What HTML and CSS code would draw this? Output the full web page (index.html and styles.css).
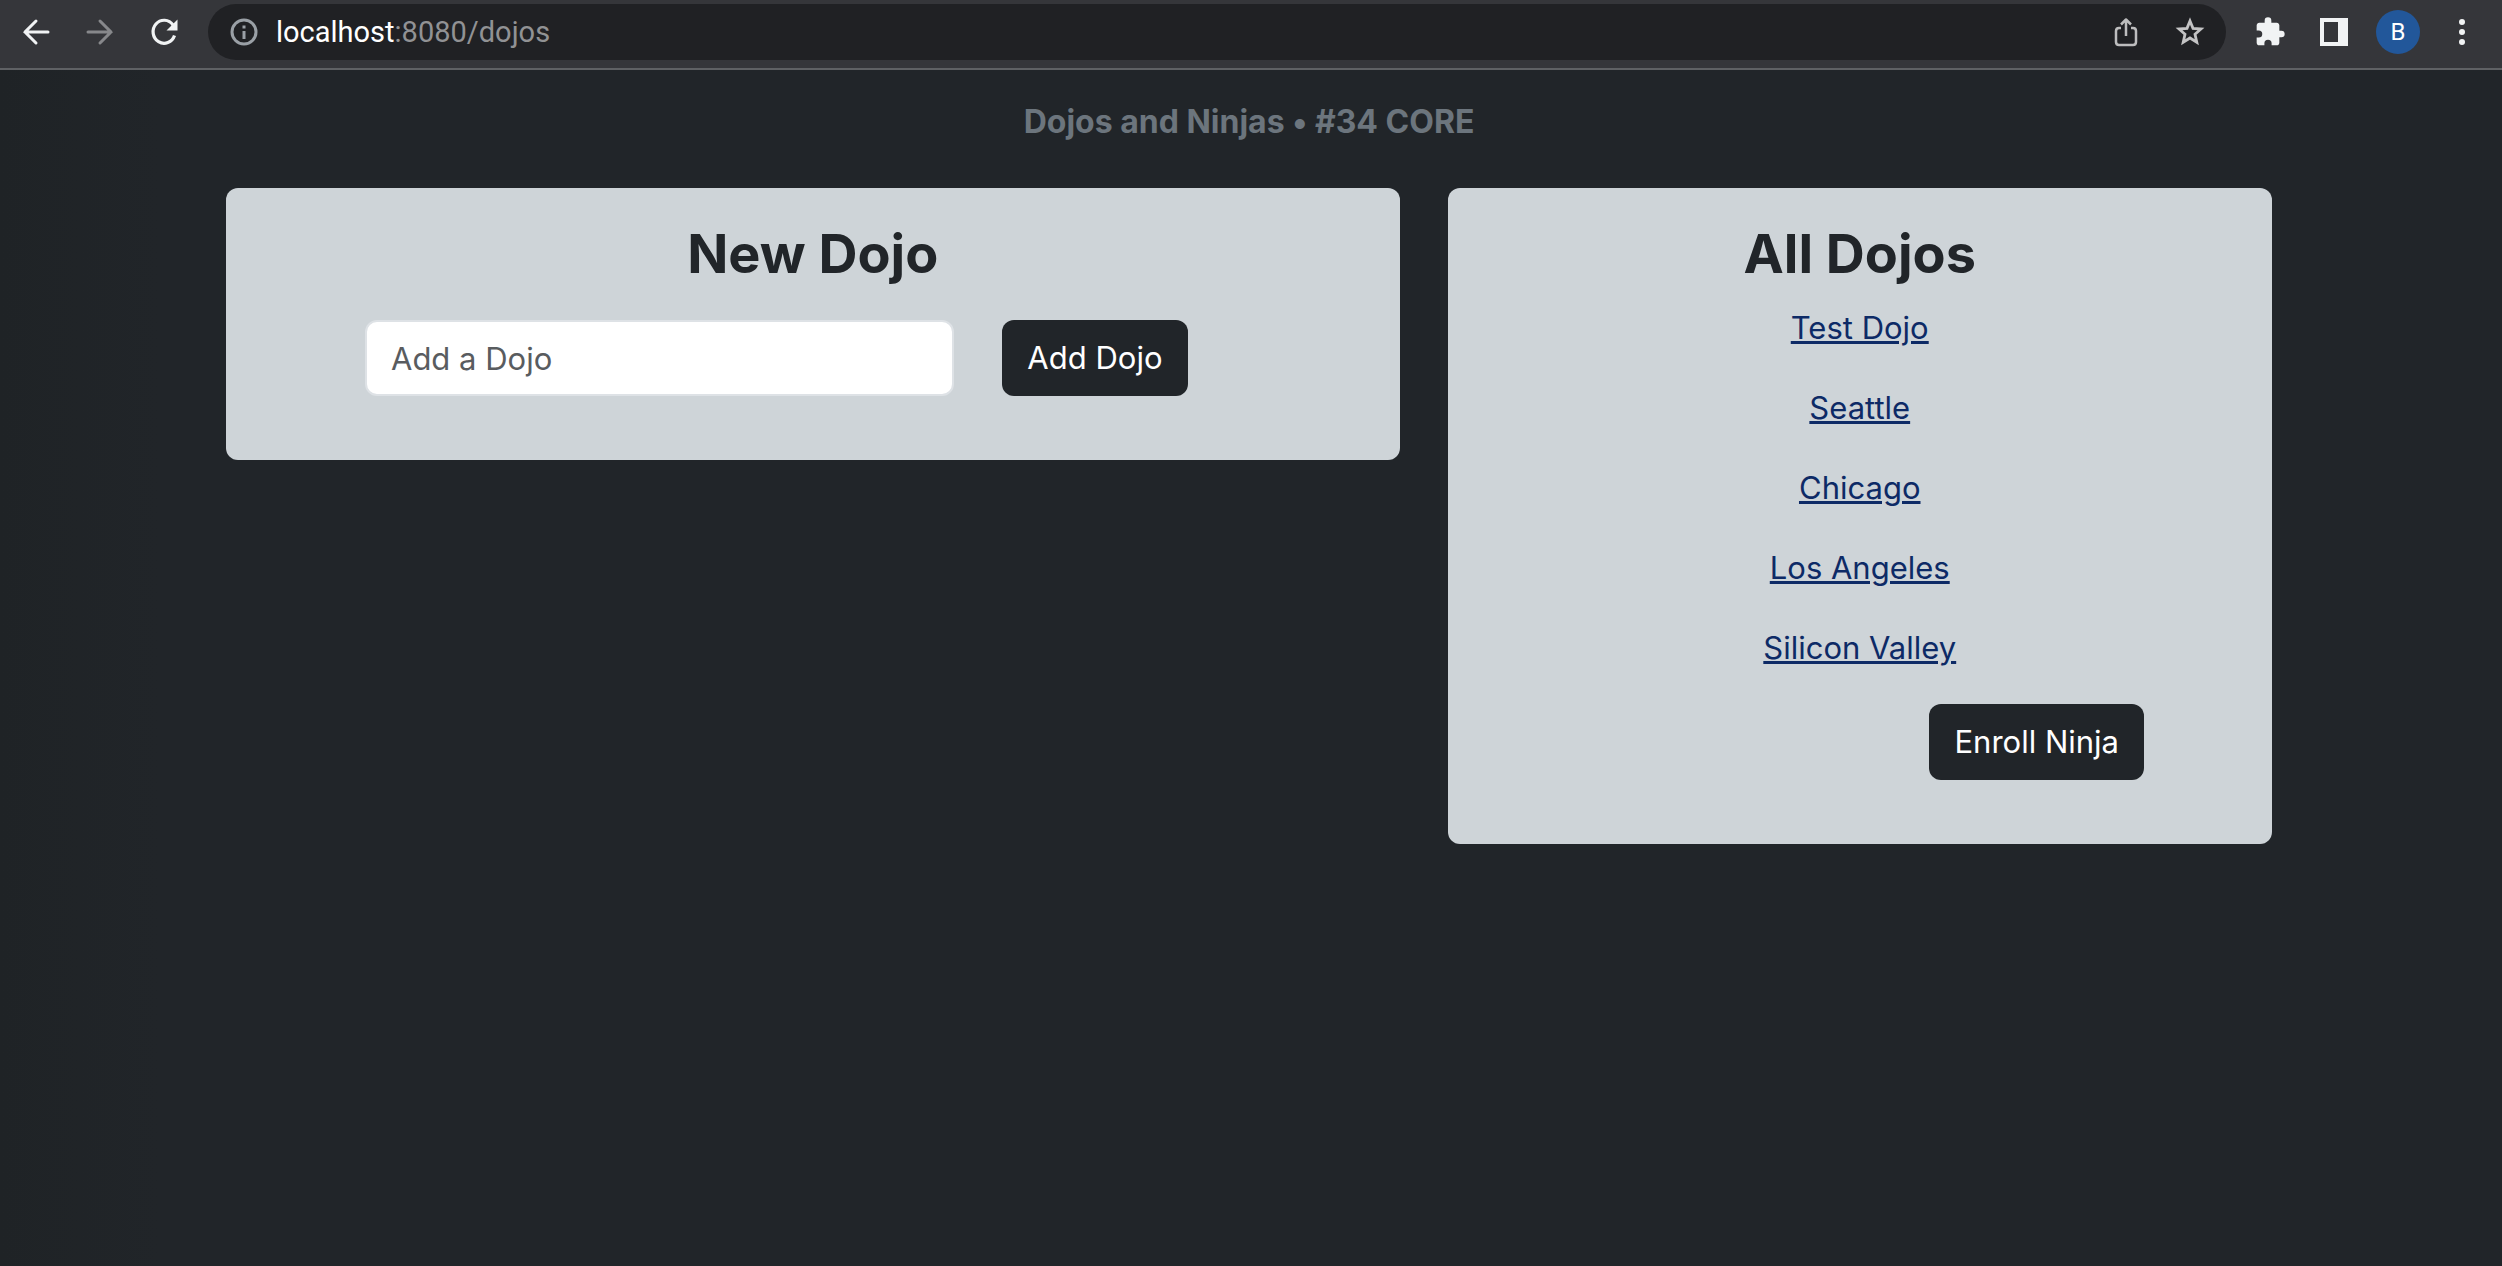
FILE: index.html
```html
<!DOCTYPE html>
<html lang="en">
<head>
<meta charset="utf-8">
<title>Dojos and Ninjas</title>
<link rel="stylesheet" href="styles.css">
</head>
<body>
<header class="toolbar">
  <div class="nav-buttons">
    <button class="icon-button" type="button" aria-label="Back">
      <svg class="icon" viewBox="0 0 32 32"><path d="M28 16H5M16 5L5 16l11 11" fill="none" stroke="#f1f3f4" stroke-width="3" stroke-linecap="round"/></svg>
    </button>
    <button class="icon-button" type="button" aria-label="Forward" disabled>
      <svg class="icon" viewBox="0 0 32 32"><path d="M4 16h23M16 5l11 11-11 11" fill="none" stroke="#87888b" stroke-width="3" stroke-linecap="round"/></svg>
    </button>
    <button class="icon-button" type="button" aria-label="Reload">
      <svg class="icon" viewBox="0 0 32 32"><path d="M26.500 19.500A11 11.500 0 1 1 25 9" fill="none" stroke="#f1f3f4" stroke-width="3.200"/><path d="M29.500 3.500V14.500H18.500z" fill="#f1f3f4"/></svg>
    </button>
  </div>
  <div class="omnibox">
    <svg class="icon" viewBox="0 0 32 32"><circle cx="16" cy="16" r="12" fill="none" stroke="#9aa0a6" stroke-width="3"/><path d="M16 9.500v3M16 15v8" stroke="#9aa0a6" stroke-width="3"/></svg>
    <div class="address">localhost<span class="address-path">:8080/dojos</span></div>
    <button class="icon-button" type="button" aria-label="Share">
      <svg class="icon" viewBox="0 0 32 32"><path d="M11 12H9q-3 0-3 3v11q0 3 3 3h14q3 0 3-3V15q0-3-3-3h-2M16 20V4M11 8.500L16 3.500l5 5" fill="none" stroke="#bdbdbe" stroke-width="2.500" stroke-linejoin="round"/></svg>
    </button>
    <button class="icon-button" type="button" aria-label="Bookmark">
      <svg class="icon" viewBox="0 0 32 32"><path d="M16 5L19 12.400 27 13 21 18.300 22.800 26.200 16 22 9.200 26.200 11 18.300 5 13 13 12.400z" fill="none" stroke="#c4c4c5" stroke-width="2.800"/></svg>
    </button>
  </div>
  <div class="actions">
    <button class="icon-button" type="button" aria-label="Extensions">
      <svg class="icon" viewBox="0 0 24 24"><path d="M20.500 11H19V7c0-1.100-.9-2-2-2h-4V3.500a2.500 2.500 0 0 0-5 0V5H4c-1.100 0-2 .9-2 2v3.800h1.500a2.700 2.700 0 0 1 0 5.400H2V20c0 1.100.9 2 2 2h3.800v-1.500a2.700 2.700 0 0 1 5.400 0V22H17c1.100 0 2-.9 2-2v-4h1.500a2.500 2.500 0 0 0 0-5z" fill="#f1f3f4"/></svg>
    </button>
    <button class="icon-button" type="button" aria-label="Side panel">
      <svg class="icon" viewBox="0 0 32 32"><path d="M2 2h28v28H2zM6 6v20h14V6z" fill="#f1f3f4" fill-rule="evenodd"/></svg>
    </button>
    <button class="avatar" type="button">B</button>
    <button class="icon-button" type="button" aria-label="Menu">
      <svg class="icon" viewBox="0 0 32 32"><g fill="#f1f3f4"><circle cx="16" cy="6" r="3"/><circle cx="16" cy="16" r="3"/><circle cx="16" cy="26" r="3"/></g></svg>
    </button>
  </div>
</header>
<main class="page">
  <h1 class="page-title">Dojos and Ninjas • #34 CORE</h1>
  <div class="columns">
    <section class="card card-new">
      <h2 class="card-title">New Dojo</h2>
      <form class="dojo-form">
        <input class="field" type="text" name="name" placeholder="Add a Dojo" aria-label="Dojo name">
        <button class="button" type="submit">Add Dojo</button>
      </form>
    </section>
    <section class="card card-all">
      <h2 class="card-title">All Dojos</h2>
      <ul class="dojo-list">
        <li><a href="#test-dojo">Test Dojo</a></li>
        <li><a href="#seattle">Seattle</a></li>
        <li><a href="#chicago">Chicago</a></li>
        <li><a href="#los-angeles">Los Angeles</a></li>
        <li><a href="#silicon-valley">Silicon Valley</a></li>
      </ul>
      <div class="card-footer">
        <a class="button" href="#enroll">Enroll Ninja</a>
      </div>
    </section>
  </div>
</main>
</body>
</html>
```
FILE: styles.css
```css
* {
  box-sizing: border-box;
}

body {
  margin: 0;
  min-height: 100vh;
  background: linear-gradient(90deg, #1f2326, #212529 160px);
  color: #212529;
  font-family: Inter, "Liberation Sans", sans-serif;
  font-size: 31px;
  line-height: 48px;
}

button {
  border: 0;
  font: inherit;
}

/* Browser toolbar */
.toolbar {
  display: flex;
  align-items: center;
  height: 70px;
  padding: 0 24px 4px 20px;
  border-bottom: 2px solid #5f6164;
  background: #35363a;
}

.nav-buttons {
  display: flex;
  gap: 32px;
  margin-right: 28px;
}

.icon-button {
  display: flex;
  padding: 0;
  background: none;
}

.icon {
  display: block;
  width: 32px;
  height: 32px;
}

.omnibox {
  display: flex;
  flex: 1;
  align-items: center;
  gap: 32px;
  height: 56px;
  padding: 0 20px;
  border-radius: 28px;
  background: #202124;
}

.address {
  flex: 1;
  margin-left: -16px;
  color: #fff;
  font-family: Roboto, "Liberation Sans", sans-serif;
  font-size: 29px;
  line-height: 32px;
}

.address-path {
  color: #919294;
}

.actions {
  display: flex;
  align-items: center;
  gap: 32px;
  margin-left: 28px;
}

.avatar {
  width: 44px;
  height: 44px;
  margin: 0 -6px;
  padding: 0;
  border-radius: 50%;
  background: #22579a;
  color: #fff;
  font-family: Roboto, "Liberation Sans", sans-serif;
  font-size: 24px;
  line-height: 44px;
}

/* Page */
.page {
  padding: 28px 4px 48px 0;
}

.page-title {
  margin: 0 0 42px;
  color: #6c757d;
  font-size: 32px;
  font-weight: 700;
  line-height: 48px;
  text-align: center;
}

.columns {
  display: grid;
  grid-template-columns: repeat(12, 1fr);
  align-items: start;
  gap: 48px;
  max-width: 2046px;
  margin: 0 auto;
}

.card {
  padding: 32px 48px 64px;
  border-radius: 12px;
  background: #ced4d8;
}

.card-new {
  grid-column: span 7;
}

.card-all {
  grid-column: span 5;
}

.card-title {
  margin: 0;
  font-size: 54px;
  font-weight: 700;
  line-height: 68px;
  text-align: center;
}

.dojo-form {
  display: flex;
  gap: 48px;
  margin: 32px 164px 0 91px;
}

.field {
  flex: 1;
  min-width: 0;
  height: 76px;
  padding: 12px 24px;
  border: 2px solid #dee2e6;
  border-radius: 12px;
  background: #fff;
  color: #212529;
  font: inherit;
}

.field::placeholder {
  color: #595c5f;
  opacity: 1;
}

.button {
  padding: 14px 25px;
  border-radius: 12px;
  background: #212529;
  color: #fff;
  text-decoration: none;
}

.dojo-list {
  display: grid;
  gap: 32px;
  margin: 16px 0 0;
  padding: 0;
  list-style: none;
  text-align: center;
}

.dojo-list a {
  color: #0d2a66;
  text-decoration-thickness: 3px;
}

.card-footer {
  display: flex;
  justify-content: flex-end;
  margin: 32px 80px 0 0;
}
```
